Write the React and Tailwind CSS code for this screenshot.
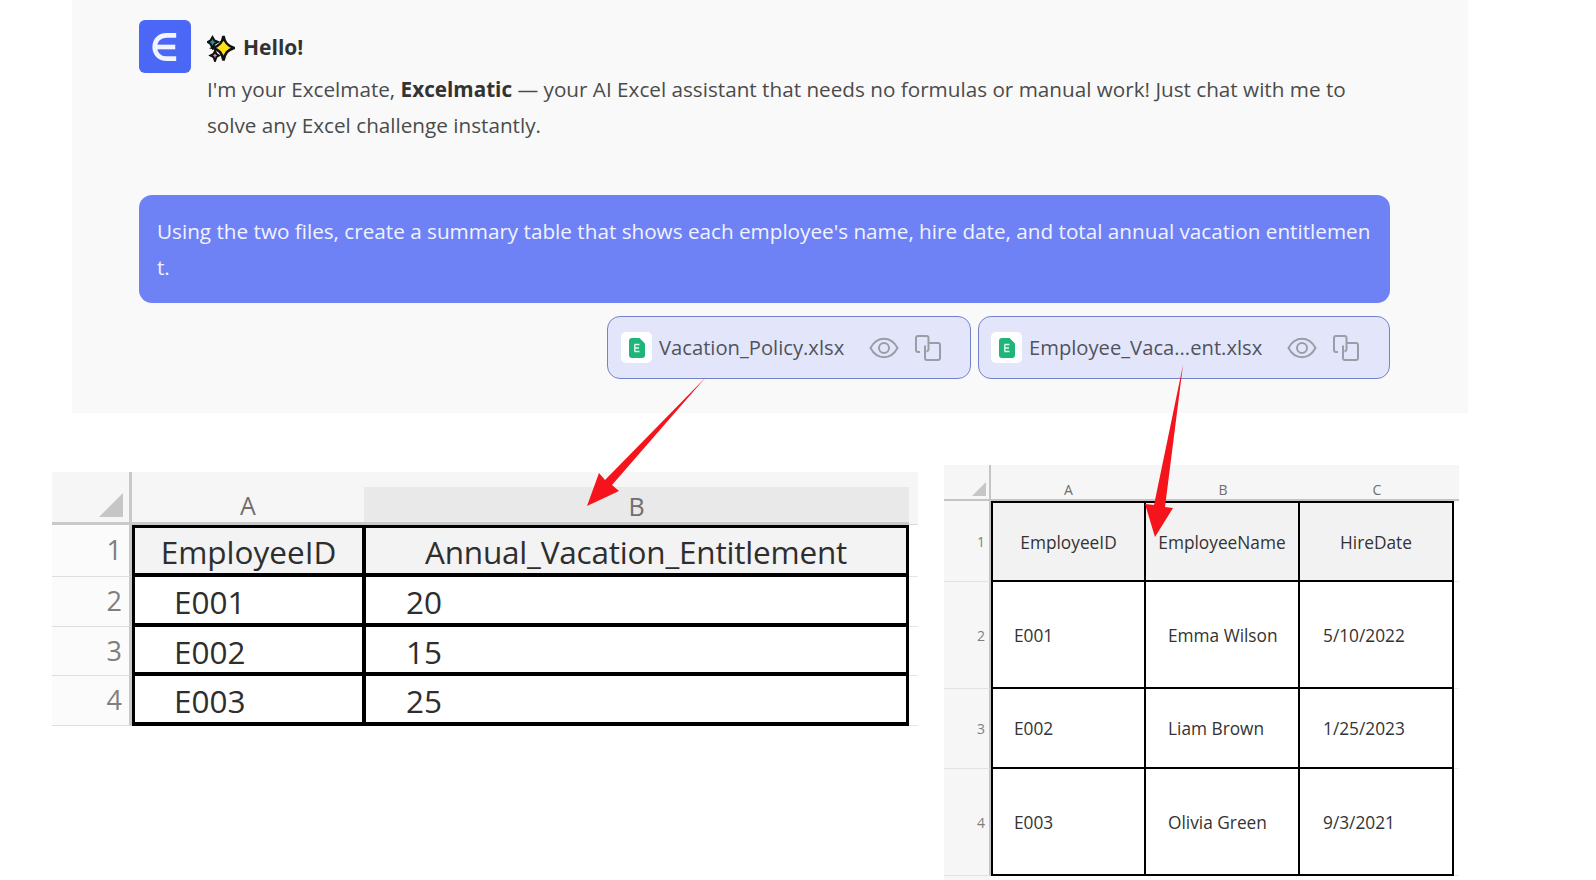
const sans = "font-['Open_Sans','Noto_Sans',sans-serif]";

function Logo() {
  return (
    <div className="w-[52px] h-[53px] shrink-0 rounded-[6px] bg-[#4a67f5] flex items-center justify-center">
      <svg width="28" height="30" viewBox="0 0 30 32" fill="none" stroke="#f1f3ff" strokeWidth="5">
        <path d="M27 3.500H16.500C9 3.500 4 9 4 16s5 12.500 12.500 12.500H27" />
        <path d="M5 16H26" />
      </svg>
    </div>
  );
}

function Sparkle() {
  return (
    <svg width="28" height="28" viewBox="0 0 28 28" className="shrink-0">
      <path d="M5.500 3 L7.500 6.500 L11 8 L7.500 10 L5.500 14 L3.500 10 L0.500 8 L3.500 6.500Z" fill="#2a8a90" stroke="#111" strokeWidth="2" />
      <path d="M8 17 L9.500 20 L12 21.500 L9.500 23 L8 27 L6.500 23 L3.500 21.500 L6.500 20Z" fill="#e58db0" stroke="#111" strokeWidth="2" />
      <path d="M16.500 2 C17.500 8.500 20.500 11.500 27 14 C20.500 16 18 19 16.500 26.500 C15 19 12.500 16 6 14 C12.500 11.500 15.500 8.500 16.500 2Z" fill="#ffe01b" stroke="#111" strokeWidth="2.600" />
    </svg>
  );
}

function Eye() {
  return (
    <svg width="30" height="22" viewBox="0 0 30 22" fill="none" stroke="#9a9da6" strokeWidth="2" className="shrink-0">
      <path d="M1.500 11C5 4.500 9.500 1.800 15 1.800S25 4.500 28.500 11C25 17.500 20.500 20.200 15 20.200S5 17.500 1.500 11Z" />
      <circle cx="15" cy="11" r="5" />
    </svg>
  );
}

function CopyIcon() {
  return (
    <svg width="26" height="26" viewBox="0 0 26 26" fill="none" stroke="#9a9da6" strokeWidth="2" className="shrink-0">
      <path d="M5 17H3A2 2 0 0 1 1 15V3A2 2 0 0 1 3 1H11.500A2 2 0 0 1 13.500 3V14.500C13.500 15.500 13 16 11.500 16.500" />
      <path d="M13.500 8H23A2 2 0 0 1 25 10V23A2 2 0 0 1 23 25H12A2 2 0 0 1 10 23V10.500" />
    </svg>
  );
}

function FileBadge() {
  return (
    <div className="w-[31px] h-[31px] shrink-0 rounded-[5px] bg-white flex items-center justify-center">
      <svg width="16" height="20" viewBox="0 0 16 20">
        <path d="M3 0H10.500L16 5.500V17A3 3 0 0 1 13 20H3A3 3 0 0 1 0 17V3A3 3 0 0 1 3 0Z" fill="#1fb57a" />
        <path d="M5.500 6.500H10.500M5.500 10H10M5.500 13.500H10.500M5.800 6.500V13.500" stroke="#dff7ec" strokeWidth="1.400" fill="none" />
      </svg>
    </div>
  );
}

function Chip({ name, width, pad }) {
  return (
    <div className={`${width} ${pad} h-[63px] rounded-[13px] border-[1.500px] border-[#7482cc] bg-[#e3e6fb] flex items-center`}>
      <FileBadge />
      <span className={`ml-[7px] mr-[25px] text-[20.200px] text-[#50535c] whitespace-nowrap ${sans}`}>{name}</span>
      <Eye />
      <div className="ml-[16px]"><CopyIcon /></div>
    </div>
  );
}

function LeftRow({ n, a, b, h, first }) {
  return (
    <div className={`flex ${h}`}>
      <div className="w-[80px] shrink-0 flex items-center justify-end pr-[7px] text-[27px] font-medium text-[#7f7f7f] bg-[#fbfbfb] border-b border-[#dedede] border-r-[3px] border-r-[#c9c9c9]">{n}</div>
      <div className={`w-[232px] shrink-0 flex items-center border-b-[4px] border-l-[3px] border-r-[2px] border-black text-[#2e2e2e] text-[31.500px] ${first ? "border-t-[3px] justify-center pt-[2px] bg-[#f3f3f3]" : "pl-[39px] pt-[4px] bg-white"}`}>{a}</div>
      <div className={`w-[545px] shrink-0 flex items-center border-b-[4px] border-l-[2px] border-r-[3px] border-black text-[#2e2e2e] text-[31.500px] ${first ? "border-t-[3px] justify-center pt-[2px] tracking-[-0.2px] bg-[#f3f3f3]" : "pl-[40px] pt-[4px] bg-white"}`}>{b}</div>
      <div className="w-[9px] shrink-0 border-b border-[#e6e6e6]" />
    </div>
  );
}

function LeftSheet() {
  const rows = [
    { n: 1, a: "EmployeeID", b: "Annual_Vacation_Entitlement", h: "h-[52px]", first: true },
    { n: 2, a: "E001", b: "20", h: "h-[50px]" },
    { n: 3, a: "E002", b: "15", h: "h-[49px]" },
    { n: 4, a: "E003", b: "25", h: "h-[50px]" },
  ];
  return (
    <div className={`w-[868px] shrink-0 ${sans}`}>
      <div className="flex h-[53px]">
        <div className="w-[80px] shrink-0 bg-[#f6f6f6] border-r-[3px] border-r-[#c9c9c9] border-b-[3px] border-b-[#c9c9c9] flex items-end justify-end pr-[6px] pb-[5px]">
          <svg width="24" height="24" viewBox="0 0 24 24"><path d="M24 0V24H0Z" fill="#c6c6c6" /></svg>
        </div>
        <div className="w-[232px] shrink-0 bg-[#f6f6f6] border-b-[3px] border-[#c9c9c9] flex items-end justify-center text-[25px] font-medium leading-[34px] text-[#6f6f6f]">A</div>
        <div className="w-[545px] shrink-0 bg-[#f6f6f6] flex flex-col">
          <div className="h-[15px]" />
          <div className="flex-1 bg-[#e9e9e9] border-b-[3px] border-[#c9c9c9] flex items-end justify-center text-[25px] font-medium leading-[32px] text-[#6f6f6f]">B</div>
        </div>
        <div className="w-[9px] shrink-0 bg-[#f6f6f6] border-b border-[#d8d8d8]" />
      </div>
      {rows.map((r) => <LeftRow key={r.n} {...r} />)}
    </div>
  );
}

function RightRow({ n, a, b, c, h, first }) {
  return (
    <div className={`flex ${h}`}>
      <div className="w-[47px] shrink-0 flex items-center justify-end pr-[4px] text-[14px] text-[#7f7f7f] bg-[#f6f6f6] border-b border-[#e2e2e2] border-r-[2px] border-r-[#c4c4c4]">{n}</div>
      <div className={`w-[155px] shrink-0 flex items-center border-b-[2px] border-r-[2px] border-l-[2px] border-black ${first ? "border-t-[2px] justify-center pt-[2px] bg-[#f2f2f2]" : "pl-[21px] pt-[2px] bg-white"}`}>{a}</div>
      <div className={`w-[154px] shrink-0 flex items-center border-b-[2px] border-r-[2px] border-black ${first ? "border-t-[2px] justify-center pt-[2px] bg-[#f2f2f2]" : "pl-[22px] pt-[2px] bg-white"}`}>{b}</div>
      <div className={`w-[154px] shrink-0 flex items-center border-b-[2px] border-r-[2px] border-black ${first ? "border-t-[2px] justify-center pt-[2px] bg-[#f2f2f2]" : "pl-[23px] pt-[2px] bg-white"}`}>{c}</div>
      <div className="w-[5px] shrink-0 border-b border-[#e8e8e8]" />
    </div>
  );
}

function RightSheet() {
  return (
    <div className={`w-[515px] shrink-0 text-[17.300px] text-[#333333] ${sans}`}>
      <div className="flex h-[36px]">
        <div className="w-[47px] shrink-0 bg-[#f6f6f6] border-r-[2px] border-r-[#c4c4c4] border-b-[2px] border-b-[#c4c4c4] flex items-end justify-end pr-[3px] pb-[3px]">
          <svg width="14" height="14" viewBox="0 0 14 14"><path d="M14 0V14H0Z" fill="#c6c6c6" /></svg>
        </div>
        <div className="w-[155px] shrink-0 bg-[#f6f6f6] border-b-[2px] border-[#c4c4c4] flex items-end justify-center text-[14px] leading-[18px] text-[#6f6f6f]">A</div>
        <div className="w-[154px] shrink-0 bg-[#f6f6f6] border-b-[2px] border-[#c4c4c4] flex items-end justify-center text-[14px] leading-[18px] text-[#6f6f6f]">B</div>
        <div className="w-[154px] shrink-0 bg-[#f6f6f6] border-b-[2px] border-[#c4c4c4] flex items-end justify-center text-[14px] leading-[18px] text-[#6f6f6f]">C</div>
        <div className="w-[5px] shrink-0 bg-[#f6f6f6] border-b-[2px] border-[#c4c4c4]" />
      </div>
      <RightRow n={1} a="EmployeeID" b="EmployeeName" c="HireDate" h="h-[81px]" first />
      <RightRow n={2} a="E001" b="Emma Wilson" c="5/10/2022" h="h-[107px]" />
      <RightRow n={3} a="E002" b="Liam Brown" c="1/25/2023" h="h-[80px]" />
      <RightRow n={4} a="E003" b="Olivia Green" c="9/3/2021" h="h-[107px]" />
      <div className="h-[6px] w-[47px] bg-[#f6f6f6]" />
    </div>
  );
}

export default function App() {
  return (
    <div className={`relative w-[1596px] h-[880px] overflow-hidden bg-white ${sans}`}>
      <section className="ml-[72px] w-[1396px] h-[413px] bg-[#f9f9f9] pl-[67px] pt-[20px]">
        <div className="flex">
          <Logo />
          <div className="ml-[16px] w-[1150px] pt-[14px]">
            <div className="flex items-center h-[28px]">
              <Sparkle />
              <span className="ml-[8px] text-[21px] font-bold text-[#333333]">Hello!</span>
            </div>
            <p className="mt-[9px] text-[20.700px] leading-[36px] text-[#4b4b4b] w-[1150px]">
              I'm your Excelmate, <b className="text-[#333333]">Excelmatic</b> — your AI Excel assistant that needs no formulas or manual work! Just chat with me to solve any Excel challenge instantly.
            </p>
          </div>
        </div>
        <div className="mt-[52px] w-[1251px] h-[108px] rounded-[13px] bg-[#6e82f6] px-[18px] py-[18px] text-[20.700px] leading-[36px] text-[#f1f3ff] break-all">
          Using the two files, create a summary table that shows each employee's name, hire date, and total annual vacation entitlement.
        </div>
        <div className="mt-[13px] w-[1251px] flex justify-end gap-[7px]">
          <Chip name="Vacation_Policy.xlsx" width="w-[364px]" pad="pl-[13px]" />
          <Chip name="Employee_Vaca...ent.xlsx" width="w-[412px]" pad="pl-[12px]" />
        </div>
      </section>
      <div className="flex items-start pl-[52px]">
        <div className="mt-[59px]"><LeftSheet /></div>
        <div className="mt-[52px] ml-[24px]"><RightSheet /></div>
      </div>
      <svg className="absolute left-0 top-0 pointer-events-none" width="1596" height="880" viewBox="0 0 1596 880">
        <path d="M706 377 L612 485 L619 491 L587 506 L599 473 L605 480Z" fill="#f5141c" />
        <path d="M1183 365 L1165 507 L1173 508 L1155 537 L1145 504 L1154 505Z" fill="#f5141c" />
      </svg>
    </div>
  );
}
